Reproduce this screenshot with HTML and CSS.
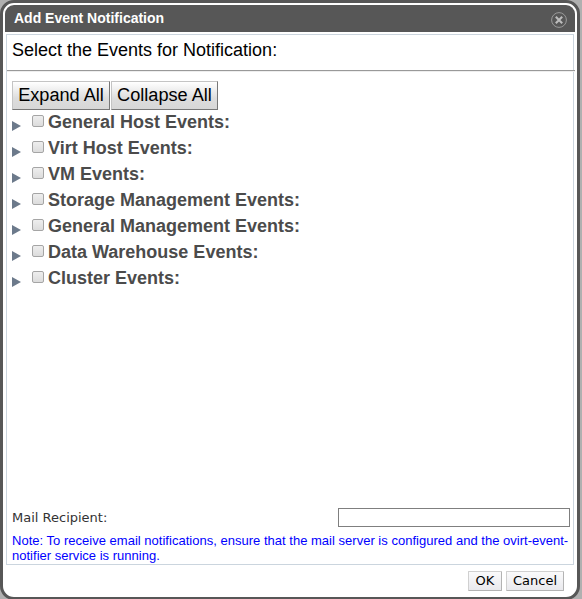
FILE: index.html
```html
<!DOCTYPE html>
<html lang="en">
<head>
<meta charset="utf-8">
<title>Add Event Notification</title>
<link rel="stylesheet" href="styles.css">
</head>
<body>
<div class="dialog">
  <header class="dialog-header">
    <h1 class="dialog-title">Add Event Notification</h1>
    <svg class="close" width="16" height="16" viewBox="0 0 16 16" role="button" aria-label="Close">
      <circle cx="8" cy="8" r="7.4" fill="none" stroke="#9a9a9a"/>
      <path d="M4.8 4.8l6.4 6.4M11.2 4.8l-6.4 6.4" stroke="#bdbdbd" stroke-width="2.1"/>
    </svg>
  </header>
  <main class="content">
    <p class="prompt">Select the Events for Notification:</p>
    <div class="rule"></div>
    <div class="tools"><button class="tool expand">Expand All</button><button class="tool collapse">Collapse All</button></div>
    <ul class="events">
      <li class="event"><span class="arrow"></span><span class="check"></span><span class="label">General Host Events:</span></li>
      <li class="event"><span class="arrow"></span><span class="check"></span><span class="label">Virt Host Events:</span></li>
      <li class="event"><span class="arrow"></span><span class="check"></span><span class="label">VM Events:</span></li>
      <li class="event"><span class="arrow"></span><span class="check"></span><span class="label">Storage Management Events:</span></li>
      <li class="event"><span class="arrow"></span><span class="check"></span><span class="label">General Management Events:</span></li>
      <li class="event"><span class="arrow"></span><span class="check"></span><span class="label">Data Warehouse Events:</span></li>
      <li class="event"><span class="arrow"></span><span class="check"></span><span class="label">Cluster Events:</span></li>
    </ul>
    <div class="mail">
      <label for="recipient">Mail Recipient:</label>
      <input class="recipient" id="recipient" type="text">
    </div>
    <p class="note">Note: To receive email notifications, ensure that the mail server is configured and the ovirt-event-<br>notifier service is running.</p>
  </main>
  <footer class="actions">
    <button class="action ok">OK</button>
    <button class="action cancel">Cancel</button>
  </footer>
</div>
</body>
</html>
```
FILE: styles.css
```css
* { box-sizing: border-box; }
body {
  margin: 0;
  width: 582px;
  height: 599px;
  overflow: hidden;
  background: #b0b0b0;
  font-family: "Liberation Sans", Arial, sans-serif;
}
.dialog {
  display: flex;
  flex-direction: column;
  width: 580px;
  height: 600px;
  padding: 2px;
  border: 3px solid #575757;
  border-radius: 14px;
  background: #fff;
}
.dialog-header {
  display: flex;
  flex: none;
  justify-content: space-between;
  height: 27px;
  padding: 0 8px 0 9px;
  border-radius: 9px 9px 0 0;
  background: #575757;
}
.dialog-title {
  margin: 0;
  color: #fff;
  font-size: 14px;
  line-height: 26px;
}
.close { margin-top: 7px; }
.content {
  display: flex;
  flex: none;
  flex-direction: column;
  width: 568px;
  height: 531px;
  margin: 2px 0 0 1px;
  border: 1px solid #cbd5de;
}
.prompt {
  margin: 0;
  height: 35px;
  padding: 4px 0 0 5px;
  color: #000;
  font-size: 18px;
  line-height: 22px;
}
.rule {
  flex: none;
  width: 568px;
  height: 2px;
  border-top: 1px solid #999;
  background: #eee;
}
.tools {
  display: flex;
  flex: none;
  gap: 1px;
  padding: 9px 0 0 5px;
}
.tool {
  height: 29px;
  padding: 0;
  border: 1px solid;
  border-color: #c4c4c4 #777 #777 #c4c4c4;
  background: linear-gradient(#fff, #ddd 60%, #d7d7d7);
  color: #000;
  font: 18.15px "Liberation Sans", Arial, sans-serif;
}
.expand { width: 98px; }
.collapse { width: 107px; }
.events {
  flex: 1;
  margin: 0;
  padding: 0 0 0 5px;
  list-style: none;
}
.event {
  display: flex;
  height: 26px;
}
.arrow {
  width: 0;
  height: 0;
  margin: 11px 11px 0 0;
  border: solid transparent;
  border-width: 5px 0 5px 9px;
  border-left-color: #6c7a8b;
}
.check {
  width: 12px;
  height: 12px;
  margin: 5px 4px 0 0;
  border: 1px solid #a5a5a5;
  border-radius: 2px;
  background: linear-gradient(#eee, #dcdcdc);
}
.label {
  color: #4b4b4b;
  font-size: 18px;
  font-weight: bold;
  line-height: 24px;
}
.mail {
  display: flex;
  flex: none;
  justify-content: space-between;
  height: 25px;
  padding: 0 3px 0 5px;
  color: #333;
  font: 13px/19px "DejaVu Sans", sans-serif;
}
.recipient {
  width: 232px;
  height: 19px;
  padding: 0 2px;
  border: 1px solid #7f7f7f;
  background: #fff;
}
.note {
  flex: none;
  height: 31px;
  margin: 0;
  padding-left: 5px;
  color: #00f;
  font-size: 13px;
  letter-spacing: 0.015px;
  line-height: 15px;
  white-space: nowrap;
}
.actions {
  display: flex;
  justify-content: flex-end;
  gap: 4px;
  padding: 6px 11px 0 0;
}
.action {
  height: 20px;
  padding: 0 0 2px;
  border: 1px solid;
  border-color: #d0d0d0 #b3b3b3 #b3b3b3 #d0d0d0;
  border-radius: 1px;
  background: linear-gradient(#fafafb, #e9e9ed);
  color: #000;
  font: 13px "DejaVu Sans", sans-serif;
}
.ok { width: 34px; }
.cancel { width: 58px; }
```
